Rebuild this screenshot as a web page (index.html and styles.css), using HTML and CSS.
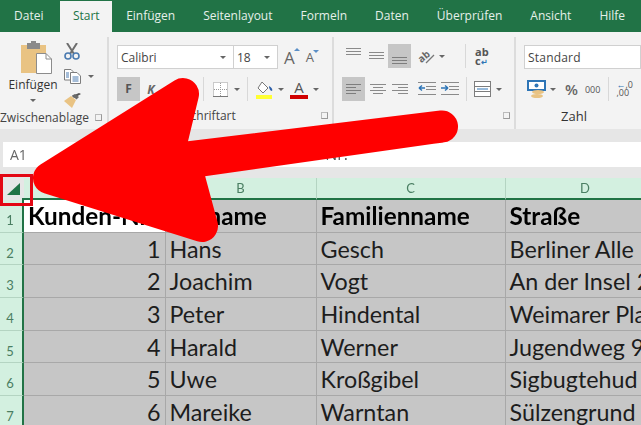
FILE: index.html
```html
<!DOCTYPE html>
<html lang="de">
<head>
<meta charset="utf-8">
<title>Excel</title>
<link rel="stylesheet" href="styles.css">
</head>
<body>
<div class="app">
  <div class="window">
  <nav class="tabs">
    <span class="tab tab-file">Datei</span>
    <span class="tab tab-active">Start</span>
    <span class="tab">Einfügen</span>
    <span class="tab">Seitenlayout</span>
    <span class="tab">Formeln</span>
    <span class="tab">Daten</span>
    <span class="tab">Überprüfen</span>
    <span class="tab">Ansicht</span>
    <span class="tab">Hilfe</span>
  </nav>

  <section class="ribbon">
    <div class="group g-clip">
      <div class="group-body clip-body">
        <div class="paste">
          <svg class="paste-icon" width="31" height="33" viewBox="0 0 31 33">
            <rect x="0" y="4" width="25" height="28" fill="#e9c383"/>
            <rect x="6" y="2" width="13" height="6" fill="#8a8a8a"/>
            <rect x="10" y="0" width="5" height="4" fill="#8a8a8a"/>
            <path d="M15.5 12.5H25L30.5 18V32.5H15.5Z" fill="#fff" stroke="#8c8c8c"/>
            <path d="M25 12.5V18H30.5" fill="none" stroke="#8c8c8c"/>
          </svg>
          <span class="paste-label">Einfügen</span>
          <span class="caret"></span>
        </div>
        <div class="clip-tools">
          <svg width="16" height="17" viewBox="0 0 16 17">
            <path d="M3 0L10 11M13 0L6 11" stroke="#6e6e6e" stroke-width="2" fill="none"/>
            <circle cx="4" cy="13" r="3" fill="none" stroke="#4a7ab0" stroke-width="1.6"/>
            <circle cx="12" cy="13" r="3" fill="none" stroke="#4a7ab0" stroke-width="1.6"/>
          </svg>
          <div class="tool-with-caret">
            <svg width="17" height="15" viewBox="0 0 17 15">
              <path d="M.5.5H7L9 2.5V11H.5Z" fill="#fff" stroke="#7d7d7d"/>
              <path d="M6.5 3.5H13L16.5 7V14.5H6.5Z" fill="#fff" stroke="#7d7d7d"/>
              <path d="M2 4H5M2 6H5M2 8H5" stroke="#4a7ab0"/>
              <path d="M8.5 8H14.5M8.5 10H14.5M8.5 12H14.5" stroke="#4a7ab0"/>
            </svg>
            <span class="caret"></span>
          </div>
          <svg width="18" height="16" viewBox="0 0 18 16">
            <path d="M10 5L17 1L15 0L8 3Z" fill="#555"/>
            <path d="M7 3L12 7L8 15L0 8Z" fill="#e9c383"/>
            <path d="M8 2.5L12.500 6.500L15 4L11 1Z" fill="#6a6a6a"/>
          </svg>
        </div>
      </div>
      <footer class="group-foot foot-clip"><span>Zwischenablage</span><i class="launch"></i></footer>
    </div>

    <div class="group g-font">
      <div class="group-body font-body">
        <div class="row font-row-top">
          <div class="combo combo-font"><span>Calibri</span><span class="caret"></span></div>
          <div class="combo combo-size"><span>18</span><span class="caret"></span></div>
          <span class="grow-a">A<i class="up"></i></span>
          <span class="shrink-a">A<i class="down"></i></span>
        </div>
        <div class="row font-row-bottom">
          <span class="btn-f">F</span>
          <span class="btn-k">K</span>
          <i class="sep sep-a"></i>
          <div class="tool-with-caret borders-tool">
            <svg width="15" height="15" viewBox="0 0 15 15">
              <rect x=".5" y=".5" width="14" height="14" fill="#fff" stroke="#9a9a9a" stroke-dasharray="1 1"/>
              <path d="M7.500 1V14M1 7.500H14" stroke="#9a9a9a" stroke-dasharray="1 1"/>
              <path d="M0 14.500H15" stroke="#777"/>
            </svg>
            <span class="caret"></span>
          </div>
          <i class="sep sep-b"></i>
          <div class="tool-with-caret fill-tool">
            <svg width="18" height="19" viewBox="0 0 18 19">
              <path d="M6 2L12 8L7 13L2 8Z" fill="#fff" stroke="#777"/>
              <path d="M13 6C15 7 17 9 16 11C14 11 13 8 13 6Z" fill="#2e5fa8"/>
              <rect x="0" y="15" width="16" height="4" fill="#ffff33"/>
            </svg>
            <span class="caret"></span>
          </div>
          <div class="tool-with-caret color-tool">
            <span class="color-a">A</span>
            <span class="caret"></span>
          </div>
        </div>
      </div>
      <footer class="group-foot foot-font"><span>Schriftart</span><i class="launch"></i></footer>
    </div>

    <div class="group g-align">
      <div class="group-body align-body">
        <div class="row align-top">
          <svg class="lines l-a" width="15" height="8" viewBox="0 0 15 8"><path d="M0 .5H15M0 3.500H15M0 6.500H15" stroke="#8a8a8a"/></svg>
          <svg class="lines l-b" width="15" height="8" viewBox="0 0 15 8"><path d="M0 .5H15M0 3.500H15M0 6.500H15" stroke="#8a8a8a"/></svg>
          <span class="toggled t-bottom"><svg width="15" height="8" viewBox="0 0 15 8"><path d="M0 .5H15M0 3.500H15M0 6.500H15" stroke="#7d7d7d"/></svg></span>
          <div class="tool-with-caret orient-tool">
            <svg width="18" height="16" viewBox="0 0 18 16"><text x="0" y="12" class="orient-text" transform="rotate(-40 6 9)">ab</text><path d="M8 15L16 7" stroke="#777" stroke-width="1.300"/></svg>
            <span class="caret"></span>
          </div>
          <i class="sep sep-c"></i>
          <span class="wrap-icon">ab<br>c<em>↵</em></span>
        </div>
        <div class="row align-bottom">
          <span class="toggled t-left"><svg width="15" height="12" viewBox="0 0 15 12"><path d="M0 1.500H15M0 4.500H10M0 7.500H15M0 10.500H10" stroke="#7d7d7d"/></svg></span>
          <svg class="lines l-c" width="16" height="12" viewBox="0 0 16 12"><path d="M0 1.500H16M3 4.500H13M0 7.500H16M3 10.500H13" stroke="#8a8a8a"/></svg>
          <svg class="lines l-d" width="16" height="12" viewBox="0 0 16 12"><path d="M0 1.500H16M6 4.500H16M0 7.500H16M6 10.500H16" stroke="#8a8a8a"/></svg>
          <svg class="lines l-e" width="18" height="14" viewBox="0 0 18 14"><path d="M0 .5H18M8 4.500H18M8 7.500H18M0 12.500H18" stroke="#8a8a8a"/><path d="M1 6H7M1 6L4 3.500M1 6L4 8.500" stroke="#2e75b6" stroke-width="1.500" fill="none"/></svg>
          <svg class="lines l-f" width="18" height="14" viewBox="0 0 18 14"><path d="M0 .5H18M8 4.500H18M8 7.500H18M0 12.500H18" stroke="#8a8a8a"/><path d="M0 6H7M7 6L4 3.500M7 6L4 8.500" stroke="#2e75b6" stroke-width="1.500" fill="none"/></svg>
          <i class="sep sep-d"></i>
          <div class="tool-with-caret merge-tool">
            <svg width="17" height="16" viewBox="0 0 17 16"><rect x=".5" y=".5" width="16" height="15" fill="#fff" stroke="#7d7d7d"/><path d="M0 5.500H17M0 10.500H17" stroke="#7d7d7d"/><path d="M3 8H14" stroke="#2e75b6"/></svg>
            <span class="caret"></span>
          </div>
        </div>
      </div>
      <footer class="group-foot foot-align"><i class="launch"></i></footer>
    </div>

    <div class="group g-num">
      <div class="group-body num-body">
        <div class="row"><div class="combo combo-num"><span>Standard</span></div></div>
        <div class="row num-tools">
          <div class="tool-with-caret money-tool">
            <svg width="20" height="18" viewBox="0 0 20 18"><rect x="1" y="1" width="17" height="9" fill="#fff" stroke="#2e75b6" stroke-width="2"/><circle cx="9.500" cy="5.500" r="2" fill="#2e75b6"/><ellipse cx="11" cy="12" rx="6" ry="2" fill="#e9c383"/><ellipse cx="10" cy="16" rx="6" ry="2" fill="#e9c383"/></svg>
            <span class="caret"></span>
          </div>
          <span class="percent">%</span>
          <span class="thousand">000</span>
          <i class="sep sep-e"></i>
          <span class="decimals"><b>←</b>,0<br>,00</span>
        </div>
      </div>
      <footer class="group-foot foot-num"><span>Zahl</span></footer>
    </div>
  </section>

  <div class="formula-band">
    <div class="name-box">A1</div>
    <div class="formula-box"><span>Kunden-Nr.</span></div>
  </div>

  <div class="sheet">
    <div class="corner"><i class="corner-tri"></i></div>
    <div class="col-h">A</div><div class="col-h">B</div><div class="col-h">C</div><div class="col-h">D</div>

    <div class="row-h">1</div>
    <div class="cell bold active">Kunden-Nr.</div><div class="cell bold">Vorname</div><div class="cell bold">Familienname</div><div class="cell bold">Straße</div>

    <div class="row-h">2</div>
    <div class="cell num">1</div><div class="cell">Hans</div><div class="cell">Gesch</div><div class="cell">Berliner Alle</div>

    <div class="row-h">3</div>
    <div class="cell num">2</div><div class="cell">Joachim</div><div class="cell">Vogt</div><div class="cell">An der Insel 2</div>

    <div class="row-h">4</div>
    <div class="cell num">3</div><div class="cell">Peter</div><div class="cell">Hindental</div><div class="cell">Weimarer Pla</div>

    <div class="row-h">5</div>
    <div class="cell num">4</div><div class="cell">Harald</div><div class="cell">Werner</div><div class="cell">Jugendweg 9</div>

    <div class="row-h">6</div>
    <div class="cell num">5</div><div class="cell">Uwe</div><div class="cell">Kroßgibel</div><div class="cell">Sigbugtehud</div>

    <div class="row-h">7</div>
    <div class="cell num">6</div><div class="cell">Mareike</div><div class="cell">Warntan</div><div class="cell">Sülzengrund</div>
  </div>
  </div>

  <div class="highlight-box"></div>
  <svg class="arrow" width="641" height="425" viewBox="0 0 641 425">
    <path d="M49 178L183 94L167 160L442 126.500L185 163L202 226Z" fill="#ff0000" stroke="#ff0000" stroke-width="32" stroke-linejoin="round"/>
  </svg>
</div>
</body>
</html>
```

FILE: styles.css
```css
* { box-sizing: border-box; }
html, body { margin: 0; padding: 0; }
body { width: 641px; height: 425px; overflow: hidden; font-family: "Open Sans", "Noto Sans", sans-serif; color: #444; background: #e6e6e6; }
i, em { font-style: normal; }
.app { position: relative; width: 641px; height: 425px; overflow: hidden; }
.window { filter: blur(.35px); }

.tabs { display: flex; height: 32px; background: #217346; color: #e6f0ea; font-size: 12px; line-height: 32px; }
.tab { padding: 0 14px; white-space: nowrap; }
.tab-file { margin-right: 3px; }
.tab-active { margin-top: 1px; padding: 0 12.500px; line-height: 30px; background: #f3f3f3; color: #217346; }

.ribbon { display: flex; height: 97px; background: #f3f3f3; }
.group { display: flex; flex: none; flex-direction: column; border-right: 2px solid #dcdcdc; margin-top: 5px; }
.group-body { flex: 1; }
.group-foot { display: flex; align-items: center; height: 19px; margin-bottom: 4px; font-size: 12px; white-space: nowrap; color: #444; }
.launch { width: 7px; height: 7px; border: 1px solid #999; border-top-color: #bbb; border-left-color: #bbb; margin-left: auto; }
.g-clip { width: 109px; }
.g-font { width: 225px; }
.g-align { width: 182px; }
.g-num { width: 125px; border-right: 0; overflow: hidden; }

.caret { display: inline-block; width: 0; height: 0; border-left: 3.500px solid transparent; border-right: 3.500px solid transparent; border-top: 3.500px solid #666; }
.row { display: flex; align-items: center; }
.sep { display: block; width: 1px; height: 24px; background: #d8d8d8; }
.tool-with-caret { display: flex; align-items: center; }

/* clipboard */
.clip-body { display: flex; padding-top: 4px; }
.paste { display: flex; flex-direction: column; align-items: center; width: 66px; }
.paste-icon { margin-left: 6px; }
.paste-label { font-size: 12px; line-height: 16px; margin-top: 3px; color: #333; }
.paste .caret { margin-top: 6px; }
.clip-tools { display: flex; flex-direction: column; align-items: flex-start; gap: 9px; margin-top: 2px; margin-left: -2px; }
.clip-tools .caret { margin-left: 7px; }
.foot-clip { padding-right: 5px; }

/* font */
.font-body { padding: 8px 0 0 8px; }
.combo { display: flex; align-items: center; justify-content: space-between; height: 24px; padding: 0 7px 0 3px; background: #fff; border: 1px solid #d0d0d0; font-size: 12px; color: #444; }
.combo-font { width: 117px; }
.combo-size { width: 45px; margin-left: -1px; }
.grow-a { position: relative; margin-left: 6px; font-size: 17px; color: #666; }
.shrink-a { position: relative; margin-left: 11px; font-size: 13px; color: #666; }
.up, .down { position: absolute; right: -5px; top: 2px; border-left: 3px solid transparent; border-right: 3px solid transparent; }
.up { border-bottom: 3px solid #5b8fc7; }
.down { border-top: 3px solid #5b8fc7; }
.font-row-bottom { margin-top: 8px; height: 24px; }
.btn-f { width: 23px; height: 24px; background: #c6c6c6; font-weight: 700; font-size: 12px; line-height: 24px; text-align: center; color: #555; }
.btn-k { width: 22px; margin-left: 0; font-weight: 700; font-style: italic; font-size: 12px; text-align: center; color: #666; }
.sep-a { margin-left: 41px; }
.borders-tool { margin-left: 9px; }
.borders-tool .caret { margin-left: 6px; }
.sep-b { margin-left: 7px; }
.fill-tool { margin-left: 8px; }
.fill-tool .caret { margin-left: 4px; }
.color-tool { margin-left: 6px; }
.color-tool .caret { margin-left: 5px; }
.color-a { display: block; width: 18px; height: 19px; border-bottom: 4px solid #d00000; font-size: 15px; line-height: 15px; text-align: center; color: #555; }
.foot-font { padding: 0 4px 0 75px; }

/* alignment */
.align-body { padding-top: 7px; }
.align-top { height: 24px; }
.lines { display: block; }
.l-a { margin: -8px 0 0 12px; }
.l-b { margin: 0 0 0 8px; }
.toggled { display: flex; align-items: center; justify-content: center; width: 23px; height: 24px; background: #c6c6c6; }
.t-bottom { margin-left: 4px; align-items: flex-end; padding-bottom: 3px; }
.orient-tool { margin-left: 7px; }
.orient-tool .caret { margin-left: 3px; }
.orient-text { font: 700 10px "Open Sans", sans-serif; fill: #666; }
.sep-c { margin-left: 20px; }
.wrap-icon { margin-left: 9px; font-size: 11px; line-height: 9px; font-weight: 700; color: #555; }
.wrap-icon em { font-size: 8px; color: #2e75b6; }
.align-bottom { height: 24px; margin-top: 9px; }
.t-left { margin-left: 8px; }
.l-c { margin-left: 5px; }
.l-d { margin-left: 6px; }
.l-e { margin-left: 10px; }
.l-f { margin-left: 5px; }
.sep-d { margin-left: 7px; }
.merge-tool { margin-left: 7px; }
.merge-tool .caret { margin-left: 5px; }
.foot-align { padding-right: 4px; }

/* number */
.num-body { padding: 8px 0 0 8px; }
.combo-num { width: 130px; padding-left: 3px; justify-content: flex-start; letter-spacing: .2px; }
.num-tools { margin-top: 8px; height: 24px; }
.money-tool { margin-left: 3px; }
.money-tool .caret { margin-left: 3px; }
.percent { margin-left: 9px; font-size: 15px; font-weight: 600; color: #666; }
.thousand { margin-left: 7px; font-size: 9px; color: #555; }
.sep-e { margin-left: 8px; }
.decimals { margin-left: 7px; font-size: 9px; line-height: 8px; color: #555; }
.decimals b { color: #2e75b6; }
.foot-num { justify-content: center; padding-right: 9px; color: #333; font-size: 13px; font-weight: 500; }

/* formula bar */
.formula-band { display: flex; gap: 6px; height: 49px; padding: 13px 0 11px 3px; background: #e6e6e6; }
.name-box { width: 120px; padding-left: 7px; background: #fff; font-size: 14px; line-height: 25px; color: #666; }
.formula-box { flex: 1; padding-left: 133px; background: #fff; font-size: 16px; line-height: 24px; color: #555; white-space: nowrap; }

/* sheet */
.sheet { display: grid; grid-template-columns: 24px 141.500px 151px 189px 160px; grid-template-rows: 22px repeat(7, 32.670px); font-family: Lato, "Open Sans", sans-serif; }
.corner { position: relative; background: #e6e6e6; }
.corner::after { content: ""; position: absolute; right: 0; bottom: 0; width: 2px; height: 2px; background: #217346; }
.corner-tri { position: absolute; left: 7px; top: 5px; width: 13px; height: 12px; background: #217346; clip-path: polygon(100% 0, 100% 100%, 0 100%); }
.col-h { background: #d3f0e0; border-bottom: 2px solid #217346; border-right: 1px solid #b4d4c2; text-align: center; font-size: 13px; line-height: 21px; color: #4a7e62; }
.row-h { background: #d3f0e0; border-right: 2px solid #217346; border-bottom: 1px solid #b4d4c2; padding: 8px 2px 0 0; text-align: center; font-size: 13px; line-height: 24px; color: #4a7e62; }
.cell { background: #c6c6c6; border-right: 1px solid #a8a8a8; border-bottom: 1px solid #a8a8a8; padding: 0 4px; font-size: 23.300px; line-height: 32px; color: #1d1d1d; white-space: nowrap; overflow: hidden; }
.bold { font-weight: 700; font-size: 24.300px; color: #000; }
.active { background: #fff; overflow: visible; }
.num { text-align: right; }

/* overlays */
.highlight-box { position: absolute; left: 0; top: 174px; width: 33px; height: 32px; border: 3px solid #e30613; }
.arrow { position: absolute; left: 0; top: 0; }
```
